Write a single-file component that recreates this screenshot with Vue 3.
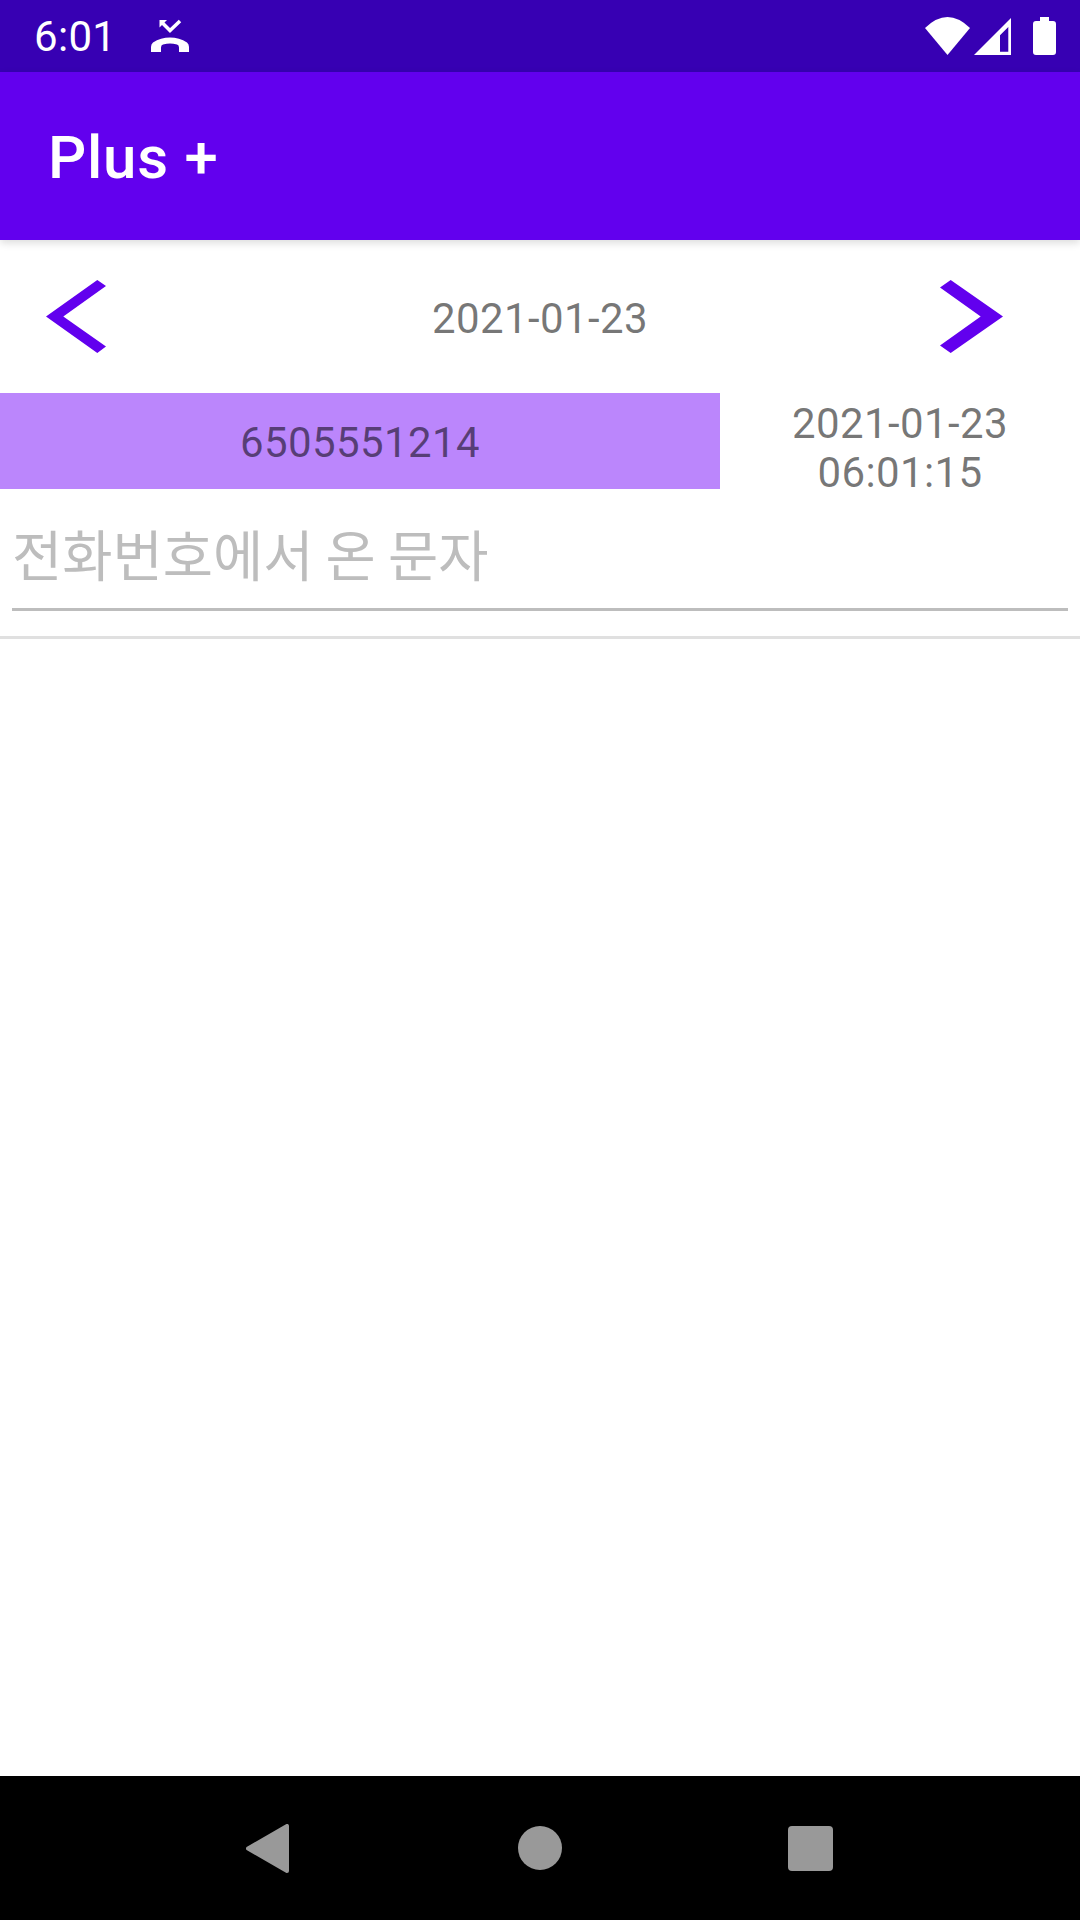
<template>
  <div class="screen">
    <div class="status-bar">
      <span class="clock">6:01</span>
      <svg class="missed-icon" width="40" height="34" viewBox="0 0 40 34">
        <path fill="#fff" d="M1 34V29Q1 26 3 24.500C8 21 14 19.500 20 19.500S32 21 37 24.500Q39 26 39 29V34H29V29.500Q29 27 27 26.500C22 25 18 25 13 26.500Q11 27 11 29.500V34Z"/>
        <path fill="#fff" d="M9.500 2H17L9.500 9.500Z"/>
        <path fill="none" stroke="#fff" stroke-width="3.500" d="M12 4.500L20 12.500L30 3"/>
      </svg>
      <div class="status-right">
        <svg width="45" height="38" viewBox="0 0 45 38">
          <path fill="#fff" d="M0 11Q22.500-11 45 11L22.500 38Z"/>
        </svg>
        <svg class="signal" width="37" height="37" viewBox="0 0 37 37">
          <path fill="#fff" fill-rule="evenodd" d="M0 37L37 0V37ZM34.300 9V33.700H26V17.300Z"/>
        </svg>
        <svg class="battery" width="23" height="38" viewBox="0 0 23 38">
          <path fill="#fff" d="M7 0H16V4H20Q23 4 23 7V35Q23 38 20 38H3Q0 38 0 35V7Q0 4 3 4H7Z"/>
        </svg>
      </div>
    </div>

    <header class="app-bar">Plus +</header>

    <main class="content">
      <div class="date-row">
        <svg class="prev" width="60" height="73" viewBox="0 0 60 73">
          <path fill="#6200ee" d="M0 36.500L51.300 0L60 6L17.300 36.500L60 66.500L51.300 73Z"/>
        </svg>
        <span class="date">{{ date }}</span>
        <svg class="next" width="63" height="73" viewBox="0 0 63 73">
          <path fill="#6200ee" d="M63 36.500L10.700 0L0 7.500L40.700 36.500L0 65.500L10.700 73Z"/>
        </svg>
      </div>

      <div class="message">
        <div class="message-top">
          <div class="sender">{{ sender }}</div>
          <div class="received">
            <span>{{ date }}</span>
            <span>{{ time }}</span>
          </div>
        </div>
        <div class="body-field">
          <div class="hint">전화번호에서 온 문자</div>
        </div>
      </div>
    </main>

    <nav class="nav-bar">
      <svg class="back" width="43" height="49" viewBox="0 0 43 49">
        <polygon points="2,24.500 41,2 41,47" fill="#999" stroke="#999" stroke-width="4" stroke-linejoin="round"/>
      </svg>
      <div class="home"></div>
      <div class="recents"></div>
    </nav>
  </div>
</template>

<script setup>
const date = '2021-01-23'
const time = '06:01:15'
const sender = '6505551214'
</script>

<style>
html, body {
  margin: 0;
  background: #fff;
}
</style>

<style scoped>
.screen {
  width: 1080px;
  height: 1920px;
  display: flex;
  flex-direction: column;
  font-family: Roboto, 'Noto Sans CJK KR', sans-serif;
  overflow: hidden;
}

.status-bar {
  height: 72px;
  background: #3700b3;
  display: flex;
  align-items: center;
  padding: 0 24px 0 34px;
  color: #fff;
  flex-shrink: 0;
}

.clock {
  font-size: 42px;
  width: 116px;
  letter-spacing: 0.3px;
}

.missed-icon {
  margin-top: -2px;
}

.status-right {
  margin-left: auto;
  display: flex;
  align-items: center;
}

.signal {
  margin-left: 4px;
}

.battery {
  margin-left: 22px;
}

.app-bar {
  height: 168px;
  padding-top: 2px;
  box-sizing: border-box;
  background: #6200ee;
  color: #fff;
  font-size: 60px;
  font-weight: 500;
  letter-spacing: 0.75px;
  display: flex;
  align-items: center;
  padding-left: 48px;
  box-shadow: 0 3px 8px rgba(0, 0, 0, 0.14);
  position: relative;
  flex-shrink: 0;
}

.content {
  flex: 1;
  background: #fff;
}

.date-row {
  height: 153px;
  display: grid;
  grid-template-columns: 1fr auto 1fr;
  align-items: center;
  color: rgba(0, 0, 0, 0.54);
  font-size: 42px;
  letter-spacing: 0.4px;
}

.date {
  padding-top: 3px;
}

.prev {
  margin-left: 46px;
}

.next {
  justify-self: end;
  margin-right: 77px;
}

.message {
  border-bottom: 3px solid #e0e0e0;
  padding-bottom: 25px;
}

.message-top {
  display: flex;
  align-items: flex-start;
  font-size: 42px;
  color: rgba(0, 0, 0, 0.54);
  letter-spacing: 0.4px;
}

.sender {
  width: 720px;
  height: 96px;
  padding-top: 2px;
  box-sizing: border-box;
  background: #bb86fc;
  display: flex;
  align-items: center;
  justify-content: center;
}

.received {
  width: 360px;
  padding-top: 6px;
  margin-bottom: -2px;
  display: flex;
  flex-direction: column;
  align-items: center;
  line-height: 49px;
}

.body-field {
  margin: 0 12px;
  height: 109px;
  border-bottom: 3px solid #bdbdbd;
  margin-top: 4px;
  display: flex;
  align-items: center;
}

.hint {
  font-size: 54.6px;
  color: #bdbdbd;
  font-family: 'Noto Sans CJK KR', sans-serif;
  line-height: 1;
}

.nav-bar {
  height: 144px;
  padding-right: 2px;
  box-sizing: border-box;
  background: #000;
  display: flex;
  align-items: center;
  justify-content: center;
  gap: 226px;
  flex-shrink: 0;
}

.back {
  margin-right: 3px;
}

.home {
  width: 44px;
  height: 44px;
  border-radius: 50%;
  background: #999;
}

.recents {
  width: 45px;
  height: 45px;
  border-radius: 4px;
  background: #999;
}
</style>
